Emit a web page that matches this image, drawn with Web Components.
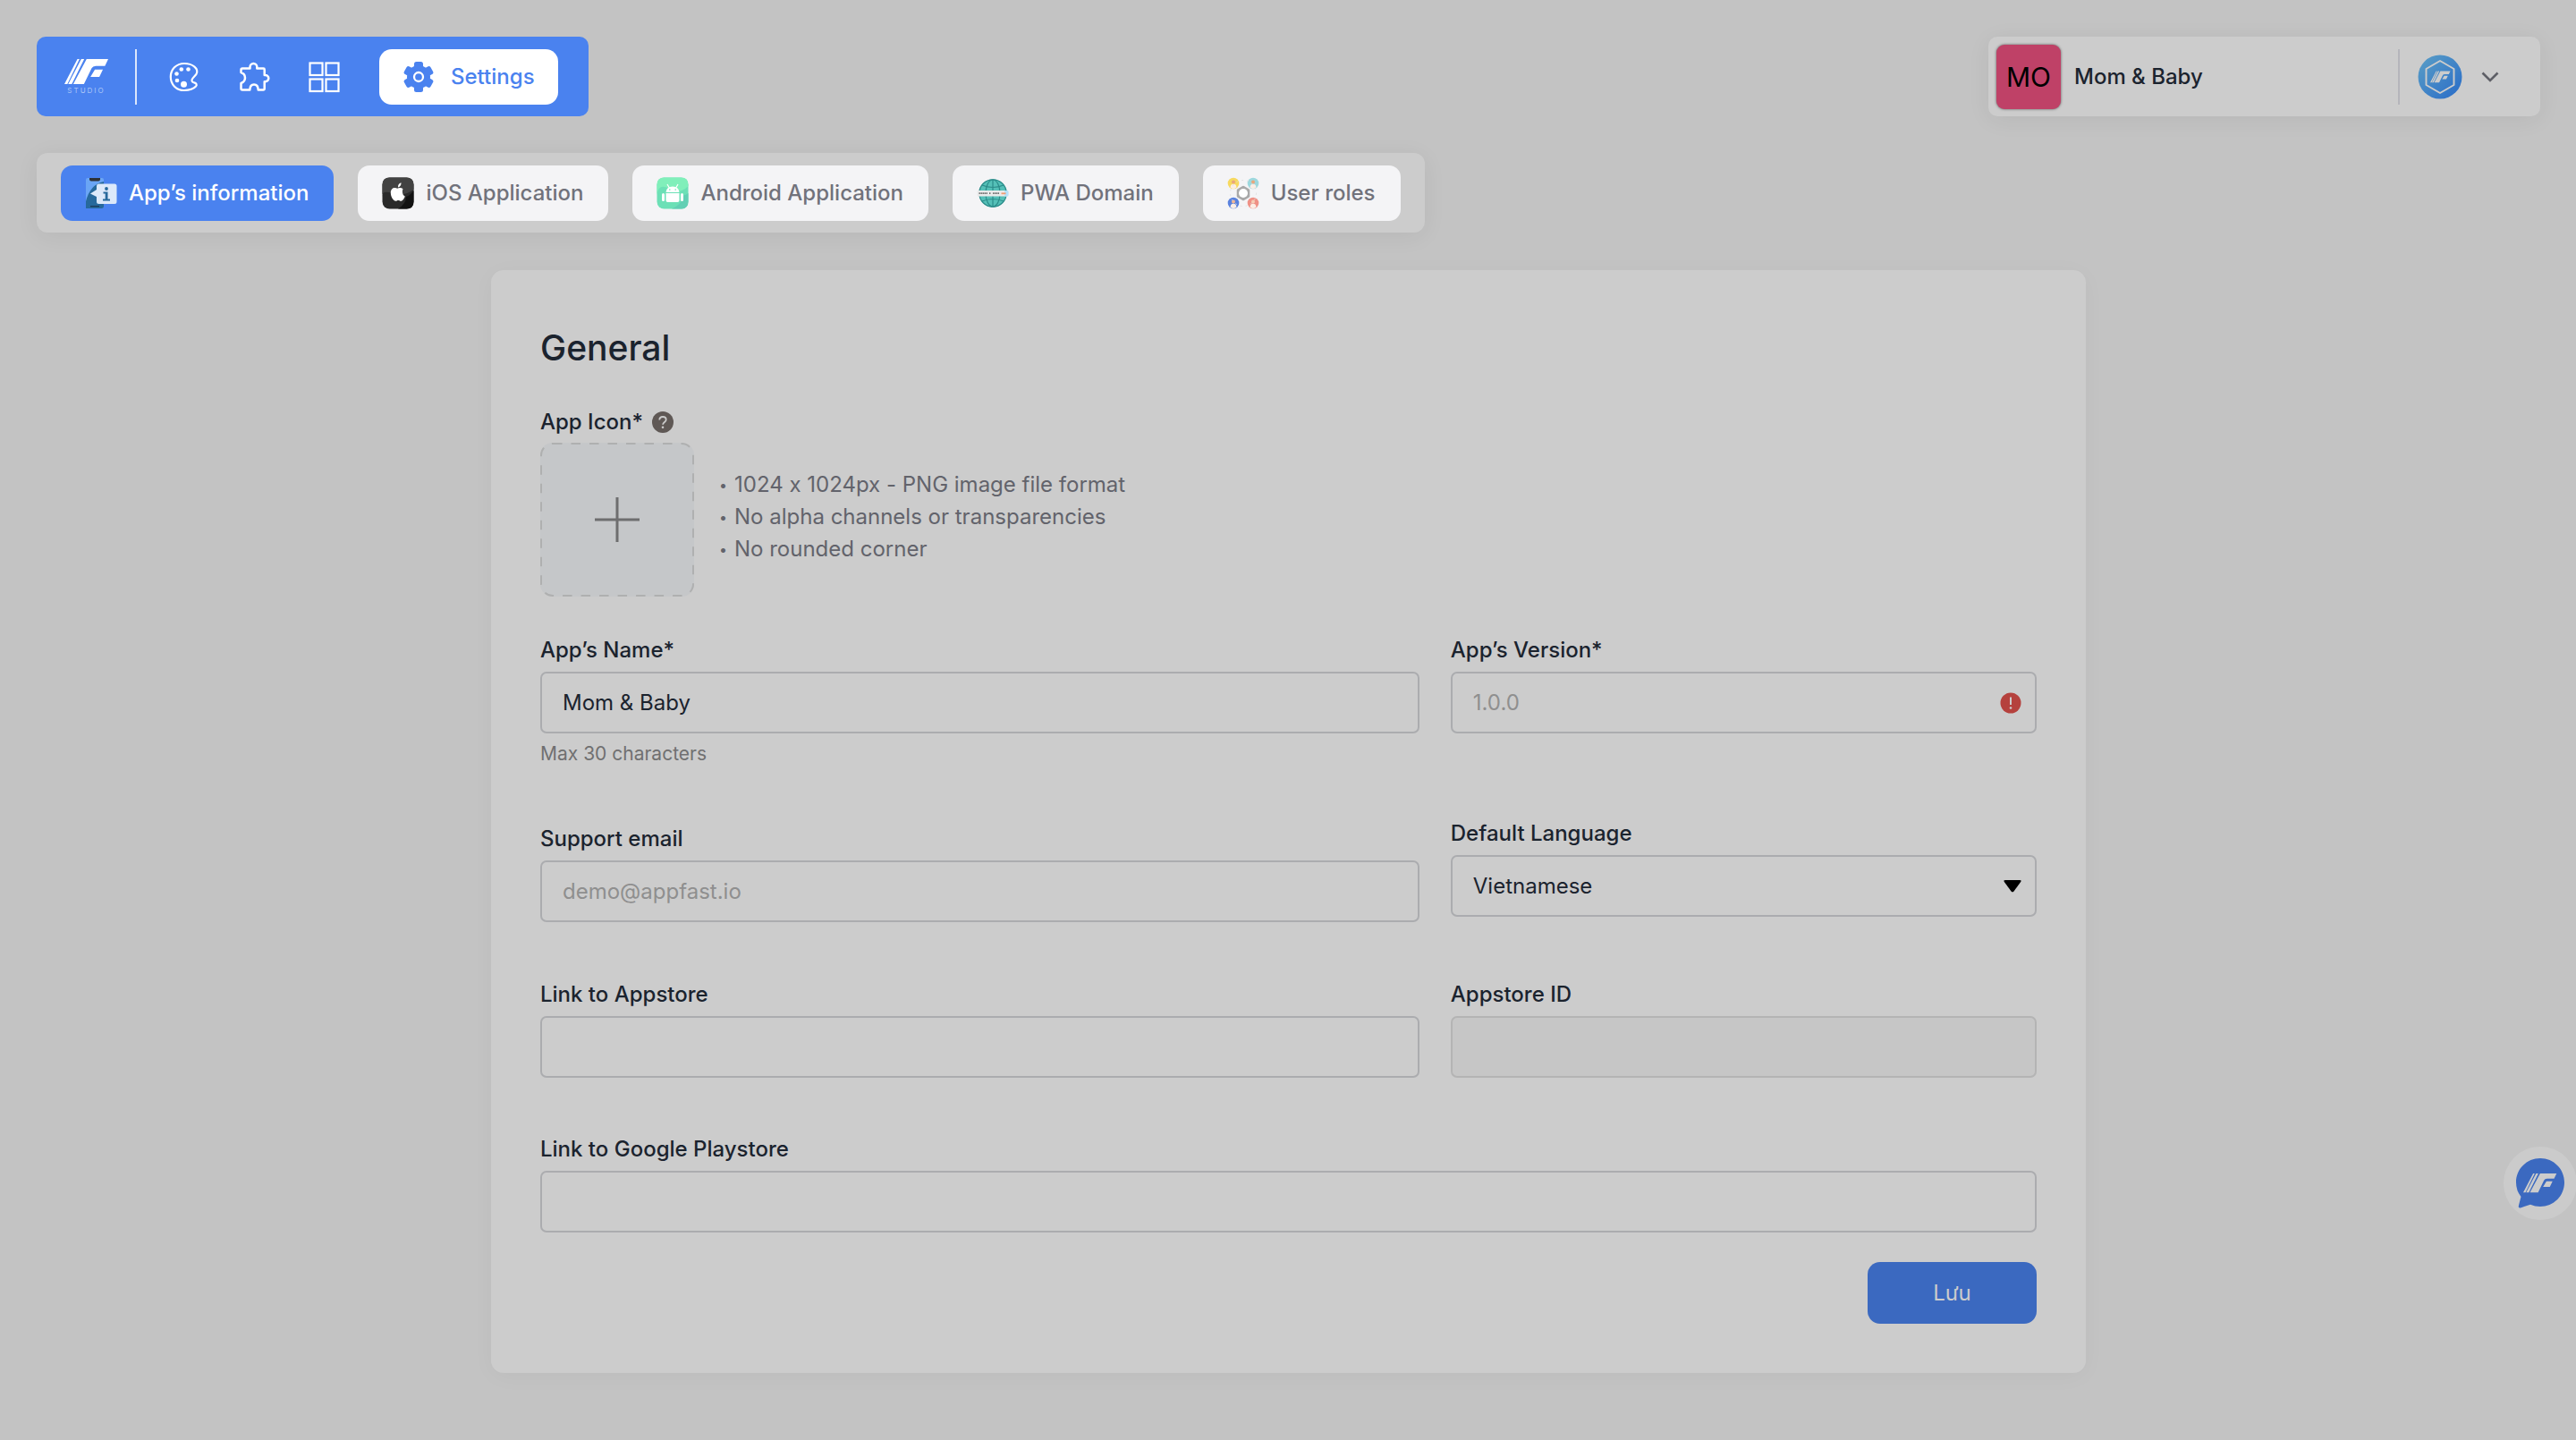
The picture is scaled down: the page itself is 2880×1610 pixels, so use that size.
<!DOCTYPE html>
<html lang="vi">
<head>
<meta charset="utf-8">
<title>App settings</title>
<style>
  :root {
    --blue: #4a82ef; --surface: #ccc; --ink: #1b232e; --muted: #62636b; --tab-text: #71727b; --tab: #f4f4f6;
    --line: #abacaf;
  }
  body { margin: 0; min-height: 100vh; background: #c3c3c3; color: var(--ink);
    font: 400 24px/32px Inter, "Liberation Sans", sans-serif; }
</style>
</head>
<body>
<settings-page></settings-page>
<script>
const define = (name, html, setup) => {
  const tpl = document.createElement('template');
  tpl.innerHTML = `<style>*{box-sizing:border-box} button,input,select{font:inherit;color:inherit;margin:0}</style>` + html;
  customElements.define(name, class extends HTMLElement {
    constructor() { super(); this.attachShadow({ mode: 'open' }).append(tpl.content.cloneNode(true)); }
    connectedCallback() { if (setup) setup(this, this.shadowRoot); }
  });
};

const MARK = `<path d="M44 0h7L10 84H0zM57 0h10L25 84H13zM75 0H148L137 23H106q-10 0-14 8L66 84H30zM103 35h27l-12 25H88z"/>`;
const person = (x, y, c, s) => `<g transform="translate(${x} ${y})"><circle r="6.3" fill="${c}"/><circle cy="-1.6" r="2" fill="${s}"/><path d="M-3.4 4.8q0-4 3.4-4t3.4 4q-3.400 2.600-6.800 0z" fill="#fbeee6"/></g>`;
const tooth = [0,60,120,180,240,300].map(a => `<rect x="13" y="1" width="10" height="10" rx="2.500" transform="rotate(${a} 18 18)"/>`).join('');
const ICONS = {
  palette: ['0 0 36 36', `<path d="M18 3C9 3 2.800 9.600 2.800 18S9 33 18 33c6 0 10.500-1.600 13-4.400 1.600-1.900.5-3.700-1.900-4.200-2.700-.6-3.500-2.600-1.700-4.800l4-4.600C35 8.500 27 3 18 3z" fill="none" stroke="#fff" stroke-width="2.200"/><g fill="#fff"><circle cx="9.500" cy="14.500" r="2.300"/><circle cx="14.800" cy="9.500" r="2.300"/><circle cx="22.500" cy="9.500" r="2.300"/><circle cx="10" cy="22" r="2.300"/><circle cx="17.500" cy="26.300" r="3.500"/></g>`],
  puzzle: ['0 0 36 36', `<path d="M5 8.500h8.500V6.800a3.900 3.900 0 0 1 7.800 0v1.700h7.200q1.200 0 1.200 1.200V16h1a3.600 3.600 0 0 1 0 7.200h-1V31q0 1.500-1.500 1.500h-5.500q-.2-6-4.700-6t-4.700 6H5q-1.500 0-1.500-1.500v-6q4.500-1.600 4.500-6t-4.500-6v-3Q3.500 8.500 5 8.500z" fill="none" stroke="#fff" stroke-width="2.500" stroke-linejoin="round"/>`],
  grid: ['0 0 36 36', `<g fill="none" stroke="#fff" stroke-width="2.200"><rect x="2.500" y="2.500" width="14" height="13.500"/><rect x="20.500" y="2.500" width="14" height="13.500"/><rect x="2.500" y="20.500" width="14" height="13.500"/><rect x="20.500" y="20.500" width="14" height="13.500"/></g>`],
  gear: ['0 0 36 36', `<g fill="#4a82ef"><circle cx="18" cy="18" r="13"/>${tooth}</g><circle cx="18" cy="18" r="5" fill="#4a82ef" stroke="#fff" stroke-width="2.300"/>`],
  info: ['0 0 36 36', `<rect x="1" y="1" width="20" height="34" rx="2" fill="#6aa5f5"/><path d="M1 35V27Q6 8 21 5v28q0 2-2 2z" fill="#27699c"/><path d="M5 1h12v1.500q0 2-2 2H7q-2 0-2-2z" fill="#2e3238"/><rect x="6" y="32" width="10" height="1.300" fill="#1c3a55"/><path d="M15 7.500h18q2.500 0 2.500 2.500v17.500q0 2.500-2.500 2.500H15.500Q13 30 13 27.500V22l-7-3.500 7-4.500V10q0-2.500 2-2.500z" fill="#dce9fa"/><g fill="#27699c"><circle cx="24" cy="13" r="1.900"/><path d="M20.500 16.500h5v8h2.500v2h-8v-2h2.700v-6h-2.200z"/></g>`],
  apple: ['0 0 36 36', `<rect x=".5" y=".5" width="35" height="35" rx="8" fill="#2a2a2a"/><path d="M8.500.5h19q8 0 8 8V14Q25 22 12 18T.5 22V8.500q0-8 8-8z" fill="#424242"/><path d="M35.500 15v12.500q0 8-8 8H18Q27 30 27 22q4-1 8.500-7z" fill="#121212"/><path d="M23.500 13.300q-1.600-1.600-3.700-1.300-1.300.3-2 .6t-2-.4c-2.800-1-6 .8-6 5.300 0 4.800 3.300 9.300 5.500 9.300 1.200 0 1.600-.8 3-.8s1.800.8 3 .8c1.800 0 3.800-3 4.400-5.300-2.800-1.300-3.400-5.600-2.200-8.200zM18 11.500q-.4-4 3.500-5.200.3 4-3.500 5.200z" fill="#fff"/>`],
  android: ['0 0 36 36', `<rect x=".5" y=".5" width="35" height="35" rx="8" fill="#6ce0b6"/><path d="M8.500.5h19q8 0 8 8V10Q26 20 14 13T.5 20V8.500q0-8 8-8z" fill="#80efba"/><path d="M35.500 18v9.500q0 8-8 8H17Q30 30 28 21q4 0 7.500-3z" fill="#62cfb4"/><g fill="#fff"><path d="M10.500 17q.6-6.500 7.500-6.500t7.500 6.500zM10.500 18h15v8q0 2-2 2h-11q-2 0-2-2z"/><rect x="6" y="18" width="3" height="9" rx="1.500"/><rect x="27" y="18" width="3" height="9" rx="1.500"/><path d="m12 8 2.300 4M24 8l-2.300 4" stroke="#fff" stroke-width="1.200"/></g><circle cx="14.800" cy="14" r=".8" fill="#6ce0b6"/><circle cx="21.200" cy="14" r=".8" fill="#6ce0b6"/>`],
  globe: ['0 0 36 36', `<circle cx="18" cy="18" r="15.500" fill="#55c0b8"/><g fill="none" stroke="#2c8c8a" stroke-width="1.200"><circle cx="18" cy="18" r="15.200"/><ellipse cx="18" cy="18" rx="8" ry="15"/><path d="M18 3v30M6 9q12 5 24 0M6 27q12-5 24 0"/></g><rect x=".5" y="15" width="35" height="6.500" rx="1.500" fill="#e9eaea"/><path d="M31 15h3q1.500 0 1.500 1.500v3.500q0 1.500-1.500 1.500h-3z" fill="#b5e1fa"/><path d="M2.500 18.200h10M14 18.200h2M18 18.200h7" stroke="#696969" stroke-width="1.800" stroke-dasharray="1.400 .6"/><path d="M27.500 18.300h5" stroke="#ee9c72" stroke-width="1.800"/>`],
  roles: ['0 0 36 36', `${person(7,7,'#f7d95f','#e9a77c')}${person(29,7,'#9dd8de','#e9a77c')}${person(7,29,'#5a82de','#f0b596')}${person(29,29,'#ef9186','#f7cdb5')}<circle cx="18" cy="18" r="14.500" fill="none" stroke="#ddd" stroke-width=".8" stroke-dasharray="2 4"/><path d="M18 11.500l5.500 3.200v6.600L18 24.500l-5.500-3.200v-6.600z" fill="#fff" stroke="#a9a9a9" stroke-width="3.500" stroke-linejoin="round"/><circle cx="18" cy="18" r="5" fill="#fff"/>`],
  mark: ['0 0 148 84', `<g fill="currentColor">${MARK}</g>`],
  badge: ['0 0 50 50', `<defs><linearGradient id="g" x1="0" y1="0" x2="1" y2="1"><stop stop-color="#5b9fc6"/><stop offset="1" stop-color="#286bc8"/></linearGradient></defs><circle cx="25" cy="25" r="24.500" fill="url(#g)"/><path d="M25 7l15.500 9v18L25 43 9.500 34V16z" fill="none" stroke="#ccc" stroke-width="1.900" stroke-linejoin="round"/><g fill="#ccc" transform="translate(14 18.500) scale(.152)">${MARK}</g>`],
  chevron: ['0 0 20 12', `<path d="M1.500 1.500 10 10l8.500-8.500" fill="none" stroke="#5e5f66" stroke-width="2.600"/>`],
  plus: ['0 0 50 50', `<path d="M25 0v50M0 25h50" stroke="#6e6e6f" stroke-width="3"/>`],
  dashes: ['0 0 172 172', `<rect x="1" y="1" width="170" height="170" rx="13" fill="none" stroke="#afb0b0" stroke-width="2" stroke-dasharray="10.500 10"/>`],
  help: ['0 0 24 24', `<circle cx="12" cy="12" r="12" fill="#5f5855"/><path d="M8.300 9.600Q8.300 6 12 6t3.700 3.200c0 2.800-3.600 2.800-3.600 5.600" fill="none" stroke="#ccc" stroke-width="1.800"/><circle cx="12" cy="17.700" r="1.300" fill="#ccc"/>`],
  alert: ['0 0 24 24', `<circle cx="12" cy="12" r="11.500" fill="#b5413d"/><path d="M12 5.500v8.500" stroke="#ccc" stroke-width="2"/><circle cx="12" cy="17.500" r="1.300" fill="#ccc"/>`],
  caret: ['0 0 20 14', `<path d="M2 0h16q2.500 0 1.200 2L11.500 12.500q-1.500 1.700-3 0L.8 2Q-.5 0 2 0z"/>`],
  chat: ['0 0 54 56', `<path d="M27 0C42 0 54 12 54 27S42 54 27 54q-6 0-11-2.200Q9 54 5 55.500q-3 .5-2-3L5.500 43Q0 36 0 27C0 12 12 0 27 0z" fill="#3b69c0"/><g fill="#ccc" transform="translate(8 17) scale(.252)">${MARK}</g>`]
};

define('ui-icon', `<style>:host{display:block;flex:none;width:36px;height:36px} svg{display:block;width:100%;height:100%}</style>`, (el, root) => {
  const t = document.createElement('template');
  const [box, body] = ICONS[el.getAttribute('name')];
  t.innerHTML = `<svg viewBox="${box}" aria-hidden="true">${body}</svg>`;
  root.append(t.content);
});

define('studio-nav', `<style>
  :host{display:block}
  nav{display:flex;align-items:center;height:89px;padding:0 34px 0 31px;border-radius:10px;background:var(--blue)}
  .logo{display:flex;flex-direction:column;align-items:center;gap:3px;margin-right:30px;color:#fff;text-decoration:none;font-size:8px;line-height:8px}
  .logo span{color:#a9c4f7;letter-spacing:2px}
  .logo ui-icon{width:49px;height:28px}
  .sep{width:2px;height:62px;background:#dbe6fb;margin-right:35px}
  .icons{display:flex;gap:42px;margin-right:44px}
  .on{display:flex;align-items:center;gap:18px;height:62px;padding:0 26px;border-radius:14px;background:#fff;color:var(--blue);font-weight:500;text-decoration:none}
</style>
<nav><a class="logo" href="#"><ui-icon name="mark"></ui-icon><span>STUDIO</span></a><span class="sep"></span>
<div class="icons"><a href="#design" aria-label="Design"><ui-icon name="palette"></ui-icon></a><a href="#plugins" aria-label="Plugins"><ui-icon name="puzzle"></ui-icon></a><a href="#layout" aria-label="Layout"><ui-icon name="grid"></ui-icon></a></div>
<a class="on" href="#settings"><ui-icon name="gear"></ui-icon><slot></slot></a></nav>`);

define('account-bar', `<style>
  :host{display:flex;align-items:center;width:617px;height:89px;padding:0 46px 0 9px;border-radius:10px;background:var(--surface);box-shadow:0 4px 27px rgba(0,0,0,.06)}
  .av{display:grid;place-items:center;width:72px;height:72px;border-radius:9px;background:#bf4167;color:#000;font-size:30px;box-shadow:0 0 3px #555;margin-right:15px}
  .name{flex:1;font-weight:500}
  .sep{width:2px;height:62px;background:#b5b5bb;margin-right:20px}
  button{display:flex;align-items:center;gap:21px;padding:0;border:0;background:none}
  .b{width:50px;height:50px}.c{width:20px;height:12px}
</style>
<span class="av"><slot name="initials"></slot></span><span class="name"><slot></slot></span><span class="sep"></span>
<button aria-label="Account"><ui-icon class="b" name="badge"></ui-icon><ui-icon class="c" name="chevron"></ui-icon></button>`);

define('tab-item', `<style>
  :host{display:block}
  button{display:flex;align-items:center;gap:13px;height:62px;padding:0 28px 0 27px;border:0;border-radius:13px;background:var(--tab);color:var(--tab-text);font-weight:500;white-space:nowrap}
  :host([active]) button{background:var(--blue);color:#fff}
</style><button><slot></slot></button>`, (el, root) => {
  const icon = document.createElement('ui-icon');
  icon.setAttribute('name', el.getAttribute('icon'));
  root.querySelector('button').prepend(icon);
});

define('tab-bar', `<style>
  :host{display:flex;align-items:center;gap:27px;width:fit-content;height:89px;padding:0 27px;border-radius:12px;background:var(--surface);box-shadow:0 4px 27px rgba(0,0,0,.06)}
</style><slot></slot>`);

define('form-field', `<style>
  :host{display:flex;flex-direction:column}
  label{font-weight:500;line-height:36px;margin-bottom:6px}
  .box{display:grid;align-items:center}
  .box>*{grid-area:1/1}
  input,select{width:100%;height:69px;padding:0 23px;border:2px solid var(--line);border-radius:7px;background:var(--surface);color:var(--ink);appearance:none;outline:0}
  input::placeholder{color:#8f8f8f;opacity:1}
  input:disabled{background:#c6c6c6;border-color:#b4b4b4}
  .end{justify-self:end;margin-right:17px;width:24px;height:24px;pointer-events:none}
  .end.caret{width:20px;height:14px}
  .hint{margin-top:9px;font-size:21px;line-height:28px;color:#707071}
</style><label for="c"></label><div class="box"></div>`, (el, root) => {
  const a = n => el.getAttribute(n);
  root.querySelector('label').textContent = a('label');
  const box = root.querySelector('.box');
  const options = a('options');
  const control = document.createElement(options ? 'select' : 'input');
  control.id = 'c';
  if (options) options.split(',').forEach(o => control.add(new Option(o)));
  else {
    control.type = a('type') || 'text';
    control.value = a('value') || '';
    control.placeholder = a('placeholder') || '';
    control.disabled = el.hasAttribute('disabled');
  }
  box.append(control);
  const end = options ? 'caret' : a('status');
  if (end) {
    const icon = document.createElement('ui-icon');
    icon.setAttribute('name', end);
    icon.className = 'end ' + end;
    box.append(icon);
  }
  if (a('hint')) {
    const hint = document.createElement('span');
    hint.className = 'hint';
    hint.textContent = a('hint');
    root.append(hint);
  }
});

define('icon-upload', `<style>
  :host{display:block}
  .label{display:flex;align-items:center;gap:10px;font-weight:500;line-height:36px;margin-bottom:5px}
  .label ui-icon{width:24px;height:24px}
  .row{display:flex;align-items:center;gap:28px}
  .drop{display:grid;place-items:center;width:172px;height:172px;border:0;border-radius:14px;background:#c5c7c9;padding:0}
  .drop ui-icon{grid-area:1/1}
  .edge{width:172px;height:172px}
  .plus{width:50px;height:50px}
  ul{margin:0 0 6px;padding:0;list-style:none;line-height:36px;color:var(--muted);font-feature-settings:"calt" 0}
  li{display:flex;gap:8px}
  li::before{content:"•";font-size:16px}
</style>
<div class="label"><label for="u">App Icon*</label><ui-icon name="help"></ui-icon></div>
<div class="row"><button class="drop" id="u"><ui-icon class="edge" name="dashes"></ui-icon><ui-icon class="plus" name="plus"></ui-icon></button>
<ul><li>1024 x 1024px - PNG image file format</li><li>No alpha channels or transparencies</li><li>No rounded corner</li></ul></div>`);

define('general-card', `<style>
  :host{display:block;max-width:1783px;margin:0 auto;padding:55px;border-radius:14px;background:var(--surface);box-shadow:0 4px 27px rgba(0,0,0,.03)}
  h1{margin:7px 0 40px;font-size:39px;line-height:50px;font-weight:500}
  .cols{display:grid;grid-template-columns:3fr 2fr;column-gap:35px;margin:42px 0 62px}
  .col{display:flex;flex-direction:column;gap:63px}
  .version{padding-bottom:31px}.language{padding-bottom:6px}
  .save{display:block;width:189px;height:69px;margin:33px 0 0 auto;border:0;border-radius:14px;background:#3b69c0;color:#ccc}
</style>
<h1>General</h1>
<icon-upload></icon-upload>
<div class="cols">
  <div class="col"><form-field label="App’s Name*" value="Mom &amp; Baby" hint="Max 30 characters"></form-field>
    <form-field label="Support email" type="email" placeholder="demo@appfast.io"></form-field>
    <form-field label="Link to Appstore"></form-field></div>
  <div class="col"><form-field class="version" label="App’s Version*" placeholder="1.0.0" status="alert"></form-field>
    <form-field class="language" label="Default Language" options="Vietnamese,English"></form-field>
    <form-field label="Appstore ID" disabled></form-field></div>
</div>
<form-field label="Link to Google Playstore"></form-field>
<button class="save">Lưu</button>`);

define('chat-bubble', `<style>
  :host{position:fixed;right:-1px;top:1282px}
  button{display:grid;place-items:center;width:82px;height:82px;padding:0;border:0;border-radius:50%;background:#cbcbcb}
  ui-icon{width:54px;height:56px}
</style><button aria-label="Chat"><ui-icon name="chat"></ui-icon></button>`);

define('settings-page', `<style>
  :host{display:flex;flex-direction:column;padding:41px 40px 75px 41px}
  header{display:flex;justify-content:space-between;margin-bottom:41px}
  tab-bar{margin-bottom:42px}
  main{display:block}
</style>
<header><studio-nav>Settings</studio-nav><account-bar><span slot="initials">MO</span>Mom &amp; Baby</account-bar></header>
<tab-bar><tab-item active icon="info">App’s information</tab-item><tab-item icon="apple">iOS Application</tab-item><tab-item icon="android">Android Application</tab-item><tab-item icon="globe">PWA Domain</tab-item><tab-item icon="roles">User roles</tab-item></tab-bar>
<main><general-card></general-card></main>
<chat-bubble></chat-bubble>`);
</script>
</body>
</html>
